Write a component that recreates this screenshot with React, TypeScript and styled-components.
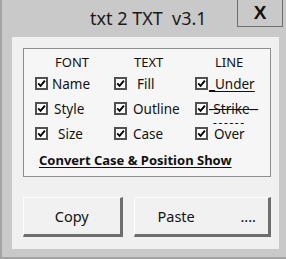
import styled, { createGlobalStyle } from "styled-components";

const GlobalStyle = createGlobalStyle`
  html, body {
    margin: 0;
    padding: 0;
    background: #c9c9c9;
  }
  * {
    box-sizing: border-box;
  }
`;

const FONT = `"Noto Sans", "Open Sans", sans-serif`;

const Window = styled.div`
  width: 286px;
  height: 259px;
  background: #c9c9c9;
  border-left: 2px solid #a3a3a3;
  border-bottom: 2px solid #a3a3a3;
  display: flex;
  flex-direction: column;
  font-family: ${FONT};
  color: #111;
  overflow: hidden;
`;

const TitleBar = styled.div`
  height: 37px;
  display: flex;
  align-items: flex-start;
`;

const Title = styled.div`
  margin-left: 88px;
  margin-top: 6px;
  font-size: 18px;
  line-height: 24px;
  white-space: pre;
  color: #1a1a1a;
`;

const CloseButton = styled.div`
  margin-left: auto;
  margin-right: 3px;
  margin-top: -1px;
  width: 46px;
  height: 28px;
  border: 1px solid #6f6f6f;
  display: flex;
  align-items: center;
  justify-content: center;
  font-family: "Liberation Sans", sans-serif;
  font-weight: bold;
  font-size: 19px;
  color: #111;
`;

const Panel = styled.div`
  margin: 0 7px 0 10px;
  height: 212px;
  background: #f0f0f0;
  padding: 11px 8px 0 11px;
  display: flex;
  flex-direction: column;
`;

const GroupBox = styled.div`
  height: 129px;
  border: 1px solid #8e8e8e;
  background: #f6f6f6;
  padding: 4px 0 0 11px;
`;

const Grid = styled.div`
  display: grid;
  grid-template-columns: 79px 81px 1fr;
  grid-auto-rows: 25px;
  grid-template-rows: 18px;
`;

const Header = styled.div`
  padding-left: 20px;
  font-size: 13px;
  line-height: 18px;
`;

const Option = styled.div`
  display: flex;
  align-items: center;
`;

const Box = styled.div`
  width: 13px;
  height: 13px;
  border: 2px solid #505050;
  background: #fff;
  display: flex;
  align-items: center;
  justify-content: center;
  flex-shrink: 0;
`;

const Label = styled.span<{ $indent: number }>`
  margin-left: ${(p) => p.$indent}px;
  font-size: 13.5px;
  line-height: 18px;
  white-space: pre;
`;

const Underlined = styled(Label)`
  text-decoration: underline;
  text-underline-offset: 2px;
`;

const Struck = styled(Label)`
  text-decoration: line-through;
`;

const OverLabel = styled(Label)`
  position: relative;
  display: inline-block;

  &::before {
    content: "------";
    position: absolute;
    left: -1px;
    top: -8px;
    font-size: 12px;
    line-height: 12px;
    letter-spacing: 1.6px;
  }
`;

const ConvertLink = styled.div`
  margin-left: 4px;
  height: 28px;
  display: flex;
  align-items: center;
  font-size: 13px;
  font-weight: bold;
  text-decoration: underline;
  text-underline-offset: 2px;
  white-space: nowrap;
`;

const ButtonRow = styled.div`
  margin-top: 20px;
  display: flex;
  gap: 11px;
`;

const Button = styled.div<{ $width: number }>`
  width: ${(p) => p.$width}px;
  height: 40px;
  background: #f1f1f1;
  border-top: 1px solid #fdfdfd;
  border-left: 1px solid #fdfdfd;
  border-right: 3px solid #6d6d6d;
  border-bottom: 3px solid #6d6d6d;
  display: flex;
  align-items: center;
  font-size: 14.5px;
`;

const CopyButton = styled(Button)`
  justify-content: center;
`;

const PasteButton = styled(Button)`
  justify-content: space-between;
  padding: 0 12px 0 23px;
`;

const Check = () => (
  <Box>
    <svg width="9" height="9" viewBox="0 0 9 9">
      <path d="M1.2 4.4 L3.6 6.9 L7.9 1.6" fill="none" stroke="#000" strokeWidth="1.9" />
    </svg>
  </Box>
);

const App = () => {
  return (
    <>
      <GlobalStyle />
      <Window>
        <TitleBar>
          <Title>txt 2 TXT  v3.1</Title>
          <CloseButton>X</CloseButton>
        </TitleBar>
        <Panel>
          <GroupBox>
            <Grid>
              <Header>FONT</Header>
              <Header>TEXT</Header>
              <Header>LINE</Header>

              <Option>
                <Check />
                <Label $indent={4}>Name</Label>
              </Option>
              <Option>
                <Check />
                <Label $indent={10}>Fill</Label>
              </Option>
              <Option>
                <Check />
                <Underlined $indent={1}>_Under</Underlined>
              </Option>

              <Option>
                <Check />
                <Label $indent={6}>Style</Label>
              </Option>
              <Option>
                <Check />
                <Label $indent={6}>Outline</Label>
              </Option>
              <Option>
                <Check />
                <Struck $indent={1}>-Strike--</Struck>
              </Option>

              <Option>
                <Check />
                <Label $indent={10}>Size</Label>
              </Option>
              <Option>
                <Check />
                <Label $indent={6}>Case</Label>
              </Option>
              <Option>
                <Check />
                <OverLabel $indent={6}>Over</OverLabel>
              </Option>
            </Grid>
            <ConvertLink>Convert Case &amp; Position Show</ConvertLink>
          </GroupBox>
          <ButtonRow>
            <CopyButton $width={100}>Copy</CopyButton>
            <PasteButton $width={138}>
              <span>Paste</span>
              <span>....</span>
            </PasteButton>
          </ButtonRow>
        </Panel>
      </Window>
    </>
  );
};

export default App;
